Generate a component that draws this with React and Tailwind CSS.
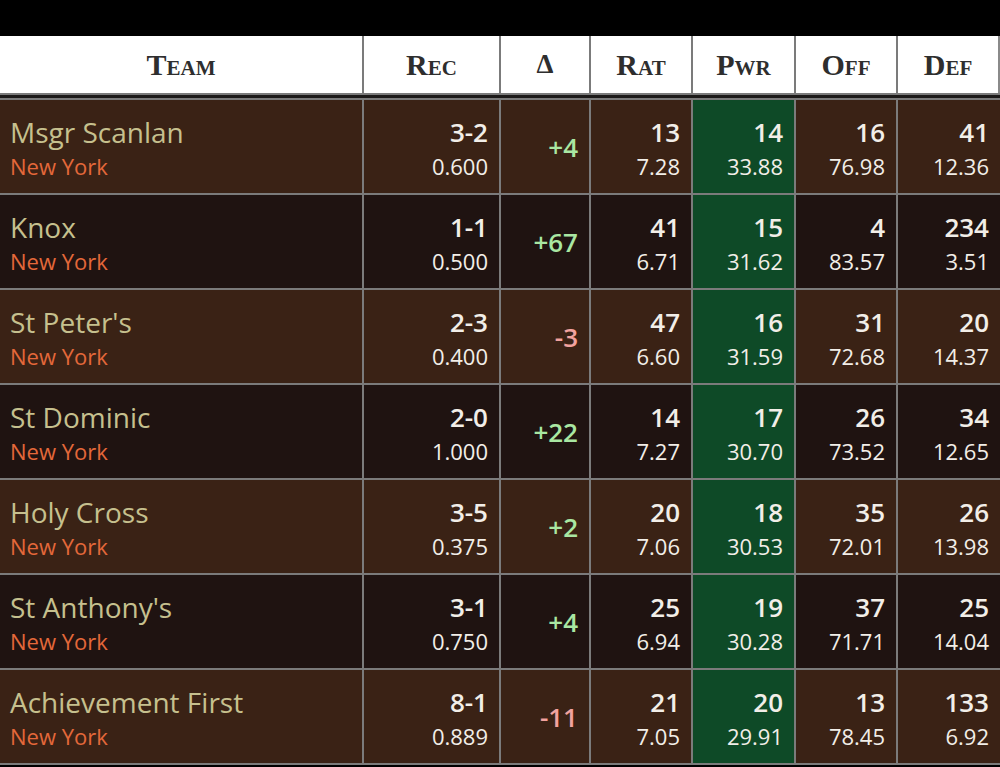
import React from "react";

const rows = [
  { name: "Msgr Scanlan", rec: "3-2", pct: "0.600", d: "+4", rat: ["13", "7.28"], pwr: ["14", "33.88"], off: ["16", "76.98"], def: ["41", "12.36"] },
  { name: "Knox", rec: "1-1", pct: "0.500", d: "+67", rat: ["41", "6.71"], pwr: ["15", "31.62"], off: ["4", "83.57"], def: ["234", "3.51"] },
  { name: "St Peter's", rec: "2-3", pct: "0.400", d: "-3", rat: ["47", "6.60"], pwr: ["16", "31.59"], off: ["31", "72.68"], def: ["20", "14.37"] },
  { name: "St Dominic", rec: "2-0", pct: "1.000", d: "+22", rat: ["14", "7.27"], pwr: ["17", "30.70"], off: ["26", "73.52"], def: ["34", "12.65"] },
  { name: "Holy Cross", rec: "3-5", pct: "0.375", d: "+2", rat: ["20", "7.06"], pwr: ["18", "30.53"], off: ["35", "72.01"], def: ["26", "13.98"] },
  { name: "St Anthony's", rec: "3-1", pct: "0.750", d: "+4", rat: ["25", "6.94"], pwr: ["19", "30.28"], off: ["37", "71.71"], def: ["25", "14.04"] },
  { name: "Achievement First", rec: "8-1", pct: "0.889", d: "-11", rat: ["21", "7.05"], pwr: ["20", "29.91"], off: ["13", "78.45"], def: ["133", "6.92"] },
];

const grid = "grid grid-cols-[362px_135px_88px_100px_101px_100px_102px] gap-x-[2px] bg-[#7b7b7b]";

function Head({ children, last }) {
  return (
    <div className={"flex items-center justify-center bg-white text-[#2e2e2e] font-bold text-[30px] " + (last ? "border-r-2 border-[#8a8a8a]" : "")}
      style={{ fontVariant: "small-caps", fontFamily: '"Liberation Serif", "Times New Roman", serif' }}>
      {children}
    </div>
  );
}

function Num({ v, bg }) {
  return (
    <div className={"flex flex-col items-end justify-center pr-[11px] pt-[2px] " + bg}>
      <div className="text-[26px] leading-[36px] font-semibold text-[#f2eee8]">{v[0]}</div>
      <div className="text-[22px] leading-[32px] text-[#f2eee8]">{v[1]}</div>
    </div>
  );
}

export default function App() {
  return (
    <div className="w-[1000px] h-[767px] bg-black overflow-hidden" style={{ fontFamily: '"Open Sans", "Noto Sans", sans-serif' }}>
      <div className="h-[36px] bg-black" />
      <div className={grid + " h-[57px]"}>
        <Head>Team</Head>
        <Head>Rec</Head>
        <Head><span className="text-[27px] leading-none">Δ</span></Head>
        <Head>Rat</Head>
        <Head>Pwr</Head>
        <Head>Off</Head>
        <Head last>Def</Head>
      </div>
      <div className="h-[2px] bg-[#7b7b7b]" />
      <div className="h-[3px] bg-[#1c1a19]" />
      {rows.map((r, i) => {
        const bg = i % 2 === 0 ? "bg-[#3a2215]" : "bg-[#1f1311]";
        const pos = r.d.startsWith("+");
        return (
          <div key={i} className={grid + " h-[95px] border-t-2 border-[#7b7b7b]"}>
            <div className={"flex flex-col justify-center pl-[10px] pt-[2px] " + bg}>
              <div className="text-[28px] leading-[36px] text-[#c6c08e]">{r.name}</div>
              <div className="text-[22px] leading-[32px] text-[#e4683a]">New York</div>
            </div>
            <Num v={[r.rec, r.pct]} bg={bg} />
            <div className={"flex items-center justify-end pr-[11px] pt-[2px] " + bg}>
              <span className={"text-[26px] font-semibold " + (pos ? "text-[#a9e7a2]" : "text-[#f2a39f]")}>{r.d}</span>
            </div>
            <Num v={r.rat} bg={bg} />
            <Num v={r.pwr} bg="bg-[#0e4a27]" />
            <Num v={r.off} bg={bg} />
            <Num v={r.def} bg={bg} />
          </div>
        );
      })}
      <div className="h-[2px] bg-[#7b7b7b]" />
    </div>
  );
}
